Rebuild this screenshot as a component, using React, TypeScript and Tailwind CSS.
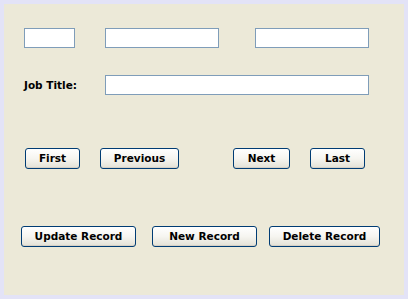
const btn =
  'h-[21px] flex items-center justify-center rounded-[3px] border border-[#003c74] bg-gradient-to-b from-white via-[#f6f5f0] to-[#e3e1d6] text-[10.5px] font-bold text-black shadow-[inset_0_-1px_0_#d6d0c5]';

function Field({ w }: { w: string }) {
  return <input type="text" className={`block h-[20px] ${w} border border-[#7f9db9] bg-white outline-none`} />;
}

export default function App() {
  return (
    <div
      className="w-[408px] h-[299px] border-4 border-[#e3e3f7] bg-[#ece9d8] text-black"
      style={{ fontFamily: '"DejaVu Sans", Verdana, sans-serif' }}
    >
      {/* name fields */}
      <div className="flex pt-[24px] pl-[20px]">
        <Field w="w-[51px]" />
        <div className="ml-[30px]">
          <Field w="w-[114px]" />
        </div>
        <div className="ml-[36px]">
          <Field w="w-[114px]" />
        </div>
      </div>

      <div className="flex items-center mt-[27px] pl-[20px]">
        <span className="w-[81px] text-[10.5px] font-bold leading-[20px]">Job Title:</span>
        <Field w="w-[264px]" />
      </div>

      {/* navigation */}
      <div className="flex mt-[53px] pl-[21px]">
        <button className={`${btn} w-[55px]`}>First</button>
        <button className={`${btn} w-[79px] ml-[20px]`}>Previous</button>
        <button className={`${btn} w-[57px] ml-[54px]`}>Next</button>
        <button className={`${btn} w-[55px] ml-[20px]`}>Last</button>
      </div>

      <div className="flex mt-[57px] pl-[17px]">
        <button className={`${btn} w-[115px]`}>Update Record</button>
        <button className={`${btn} w-[105px] ml-[16px]`}>New Record</button>
        <button className={`${btn} w-[111px] ml-[12px]`}>Delete Record</button>
      </div>
    </div>
  );
}
